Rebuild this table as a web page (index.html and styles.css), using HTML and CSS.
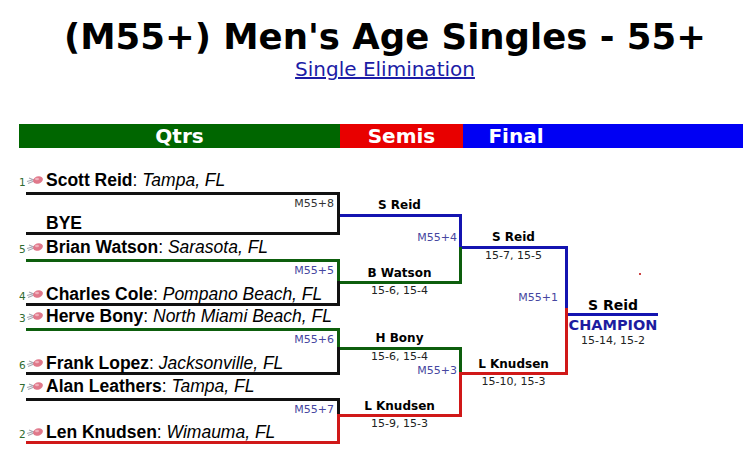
FILE: index.html
```html
<!DOCTYPE html>
<html lang="en">
<head>
<meta charset="utf-8">
<title>(M55+) Men's Age Singles - 55+</title>
<link rel="stylesheet" href="styles.css">
</head>
<body>
<div class="page">
  <h1 class="title">(M55+) Men's Age Singles - 55+</h1>
  <div class="subtitle"><a href="#">Single Elimination</a></div>

  <div class="rounds">
    <div class="round r-qtrs">Qtrs</div>
    <div class="round r-semis">Semis</div>
    <div class="round r-final">Final</div>
    <div class="round r-rest"></div>
  </div>

  <div class="bracket">
    <!-- Quarterfinals -->
    <div class="col col-q">
      <div class="p-slot s1">
        <div class="player"><span class="seed">1</span><svg class="icon" viewBox="0 0 18 10"><path d="M1 6.5 L8 4.5 M2 8.5 L8 6 M3 3 L8 5" stroke="#a8a8b4" stroke-width="1.2" fill="none"/><ellipse cx="12" cy="5" rx="5" ry="3.6" fill="#e0788a" transform="rotate(-20 12 5)"/><ellipse cx="11" cy="4" rx="2" ry="1.2" fill="#f0b0bc"/></svg><b>Scott Reid</b>: <i>Tampa, FL</i></div>
      </div>
      <div class="box m1">
        <div class="half top"><div class="mlabel dark">M55+8</div></div>
        <div class="half bot"><div class="player bye"><b>BYE</b></div></div>
      </div>
      <div class="p-slot s2">
        <div class="player"><span class="seed">5</span><svg class="icon" viewBox="0 0 18 10"><path d="M1 6.5 L8 4.5 M2 8.5 L8 6 M3 3 L8 5" stroke="#a8a8b4" stroke-width="1.2" fill="none"/><ellipse cx="12" cy="5" rx="5" ry="3.6" fill="#e0788a" transform="rotate(-20 12 5)"/><ellipse cx="11" cy="4" rx="2" ry="1.2" fill="#f0b0bc"/></svg><b>Brian Watson</b>: <i>Sarasota, FL</i></div>
      </div>
      <div class="box m2">
        <div class="half top green"><div class="mlabel">M55+5</div></div>
        <div class="half bot"><div class="player"><span class="seed">4</span><svg class="icon" viewBox="0 0 18 10"><path d="M1 6.5 L8 4.5 M2 8.5 L8 6 M3 3 L8 5" stroke="#a8a8b4" stroke-width="1.2" fill="none"/><ellipse cx="12" cy="5" rx="5" ry="3.6" fill="#e0788a" transform="rotate(-20 12 5)"/><ellipse cx="11" cy="4" rx="2" ry="1.2" fill="#f0b0bc"/></svg><b>Charles Cole</b>: <i>Pompano Beach, FL</i></div></div>
      </div>
      <div class="p-slot s3">
        <div class="player"><span class="seed">3</span><svg class="icon" viewBox="0 0 18 10"><path d="M1 6.5 L8 4.5 M2 8.5 L8 6 M3 3 L8 5" stroke="#a8a8b4" stroke-width="1.2" fill="none"/><ellipse cx="12" cy="5" rx="5" ry="3.6" fill="#e0788a" transform="rotate(-20 12 5)"/><ellipse cx="11" cy="4" rx="2" ry="1.2" fill="#f0b0bc"/></svg><b>Herve Bony</b>: <i>North Miami Beach, FL</i></div>
      </div>
      <div class="box m3">
        <div class="half top green"><div class="mlabel">M55+6</div></div>
        <div class="half bot"><div class="player"><span class="seed">6</span><svg class="icon" viewBox="0 0 18 10"><path d="M1 6.5 L8 4.5 M2 8.5 L8 6 M3 3 L8 5" stroke="#a8a8b4" stroke-width="1.2" fill="none"/><ellipse cx="12" cy="5" rx="5" ry="3.6" fill="#e0788a" transform="rotate(-20 12 5)"/><ellipse cx="11" cy="4" rx="2" ry="1.2" fill="#f0b0bc"/></svg><b>Frank Lopez</b>: <i>Jacksonville, FL</i></div></div>
      </div>
      <div class="p-slot s4">
        <div class="player"><span class="seed">7</span><svg class="icon" viewBox="0 0 18 10"><path d="M1 6.5 L8 4.5 M2 8.5 L8 6 M3 3 L8 5" stroke="#a8a8b4" stroke-width="1.2" fill="none"/><ellipse cx="12" cy="5" rx="5" ry="3.6" fill="#e0788a" transform="rotate(-20 12 5)"/><ellipse cx="11" cy="4" rx="2" ry="1.2" fill="#f0b0bc"/></svg><b>Alan Leathers</b>: <i>Tampa, FL</i></div>
      </div>
      <div class="box m4">
        <div class="half top"><div class="mlabel">M55+7</div></div>
        <div class="half bot red"><div class="player"><span class="seed">2</span><svg class="icon" viewBox="0 0 18 10"><path d="M1 6.5 L8 4.5 M2 8.5 L8 6 M3 3 L8 5" stroke="#a8a8b4" stroke-width="1.2" fill="none"/><ellipse cx="12" cy="5" rx="5" ry="3.6" fill="#e0788a" transform="rotate(-20 12 5)"/><ellipse cx="11" cy="4" rx="2" ry="1.2" fill="#f0b0bc"/></svg><b>Len Knudsen</b>: <i>Wimauma, FL</i></div></div>
      </div>
    </div>

    <!-- Semifinals -->
    <div class="col col-s">
      <div class="area above-s"><div class="slabel">S Reid</div></div>
      <div class="box sm1">
        <div class="half top blue"><div class="mlabel tight">M55+4</div></div>
        <div class="half bot green"><div class="slabel">B Watson</div></div>
      </div>
      <div class="area gap-s">
        <div class="score">15-6, 15-4</div>
        <div class="slabel">H Bony</div>
      </div>
      <div class="box sm2">
        <div class="half top green"><div class="score">15-6, 15-4</div><div class="mlabel tight">M55+3</div></div>
        <div class="half bot red"><div class="slabel">L Knudsen</div></div>
      </div>
      <div class="area"><div class="score">15-9, 15-3</div></div>
    </div>

    <!-- Final -->
    <div class="col col-f">
      <div class="area above-f"><div class="slabel">S Reid</div></div>
      <div class="box fm">
        <div class="half top blue"><div class="score">15-7, 15-5</div><div class="mlabel wide">M55+1</div></div>
        <div class="half bot red"><div class="slabel">L Knudsen</div></div>
      </div>
      <div class="area"><div class="score">15-10, 15-3</div></div>
    </div>

    <!-- Champion -->
    <div class="col col-c">
      <div class="above-c"><span class="dot"></span><div class="clabel">S Reid</div></div>
      <div class="champ-line"></div>
      <div class="champion">CHAMPION</div>
      <div class="score">15-14, 15-2</div>
    </div>
  </div>
</div>
</body>
</html>
```

FILE: styles.css
```css
html {
  overflow: hidden;
}

body {
  margin: 8px 0 8px 8px;
  background: #ffffff;
  color: #000000;
  font-family: "DejaVu Sans", Verdana, sans-serif;
}

.page {
  width: 754px;
  padding-top: 9px;
}

.title {
  margin: 0;
  text-align: center;
  font: bold 35.5px/40px "DejaVu Sans", Verdana, sans-serif;
}

.subtitle {
  text-align: center;
  font: 20px/24px "DejaVu Sans", Verdana, sans-serif;
}

.subtitle a {
  color: #1c1ca6;
}

/* round header bar */
.rounds {
  display: flex;
  width: 760px;
  height: 24px;
  margin: 43px 0 0 11px;
  color: #ffffff;
  font: bold 20px/24px "DejaVu Sans", Verdana, sans-serif;
}

.round {
  text-align: center;
  flex-shrink: 0;
}

.r-qtrs { width: 321px; background: #006600; }
.r-semis { width: 123px; background: #e80000; }
.r-final { width: 106px; background: #0000f4; }
.r-rest { flex: 1; background: #0000f4; }

/* bracket */
.bracket {
  display: flex;
  margin: 22px 0 0 11px;
}

.col {
  display: flex;
  flex-direction: column;
  flex-shrink: 0;
}

.col-q { width: 321px; }
.col-s { width: 122px; }
.col-f { width: 106px; }
.col-c { width: 90px; }

.box {
  display: flex;
  flex-direction: column;
  flex-shrink: 0;
}

.col-q .box {
  margin-left: 7px;
}

.half {
  box-sizing: border-box;
  display: flex;
  flex-direction: column;
  flex-shrink: 0;
  border-right: 3px solid #111111;
}

.half.top {
  border-top: 3px solid #111111;
}

.half.bot {
  border-bottom: 3px solid #111111;
  justify-content: flex-end;
}

.half.green { border-color: #0d5e0d; }
.half.red { border-color: #d01818; }
.half.blue { border-color: #1414b0; }

/* box heights */
.m1 .top { height: 22px; }
.m1 .bot { height: 21px; }
.m2 .top { height: 22px; }
.m2 .bot { height: 25px; }
.m3 .top { height: 19px; }
.m3 .bot { height: 28px; }
.m4 .top { height: 16px; }
.m4 .bot { height: 30px; }

.sm1 .top { height: 33px; }
.sm1 .bot { height: 37px; }
.sm2 .top { height: 25px; }
.sm2 .bot { height: 45px; }

.fm .top { height: 62px; }
.fm .bot { height: 67px; }

/* player slots between boxes */
.p-slot {
  box-sizing: border-box;
  display: flex;
  flex-direction: column;
  justify-content: flex-end;
  padding-bottom: 3px;
  flex-shrink: 0;
}

.s1 { height: 22px; }
.s2 { height: 24px; }
.s3 { height: 22px; }
.s4 { height: 23px; }

.player {
  font: 17.5px/17px "Liberation Sans", Arial, sans-serif;
  white-space: nowrap;
}

.half.bot .player {
  margin-left: -7px;
}

.player.bye {
  padding-left: 27px;
}

.seed {
  display: inline-block;
  width: 7px;
  font: 10.5px/10px "DejaVu Sans", Verdana, sans-serif;
  color: #2f6b2f;
}

.icon {
  width: 18px;
  height: 10px;
  margin-right: 2px;
  vertical-align: 1px;
}

/* small text */
.mlabel {
  font: 11px/14px "DejaVu Sans", Verdana, sans-serif;
  color: #4646a0;
  text-align: right;
  padding: 2px 3px 0 0;
  flex-shrink: 0;
}

.mlabel.dark {
  color: #333333;
}

.mlabel.tight {
  margin-top: auto;
  padding: 0 2px 2px 0;
}

.mlabel.wide {
  margin-top: auto;
  padding: 0 7px 3px 0;
}

.score {
  font: 11px/14px "DejaVu Sans", Verdana, sans-serif;
  color: #222222;
  text-align: center;
  flex-shrink: 0;
}

.slabel {
  font: bold 12px/15px "DejaVu Sans", Verdana, sans-serif;
  text-align: center;
  flex-shrink: 0;
}

.area {
  display: flex;
  flex-direction: column;
  padding-right: 3px;
  flex-shrink: 0;
}

.above-s {
  height: 44px;
  justify-content: flex-end;
}

.above-s .slabel,
.above-f .slabel {
  padding-bottom: 1px;
}

.above-f {
  height: 76px;
  justify-content: flex-end;
}

.gap-s {
  height: 63px;
  justify-content: space-between;
}

.gap-s .slabel {
  padding-bottom: 1px;
}

/* champion */
.above-c {
  height: 143px;
  display: flex;
  flex-direction: column;
}

.dot {
  display: block;
  width: 2px;
  height: 2px;
  margin: 103px 0 auto 71px;
  background: #cc4444;
}

.clabel {
  font: bold 14px/16px "DejaVu Sans", Verdana, sans-serif;
  text-align: center;
}

.champ-line {
  border-top: 3px solid #1414b0;
}

.champion {
  font: bold 14.5px/18px "DejaVu Sans", Verdana, sans-serif;
  color: #1c1ca0;
  text-align: center;
  white-space: nowrap;
}
```
